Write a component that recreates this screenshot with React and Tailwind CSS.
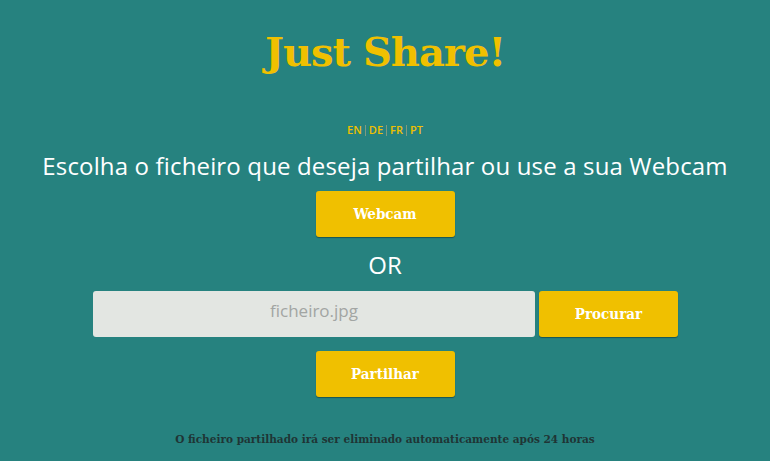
export default function App() {
  const serif = { fontFamily: '"DejaVu Serif Condensed", "DejaVu Serif", serif' };
  const titleFont = { fontFamily: '"DejaVu Serif", serif' };
  const btn =
    "bg-[#f0c000] text-white font-bold text-[15px] w-[139px] h-[46px] rounded-[3px] shadow-[0_1px_1px_rgba(0,0,0,0.35)] flex items-center justify-center";
  return (
    <div className="w-[770px] h-[461px] bg-[#26827f] flex flex-col items-center font-['Open_Sans',sans-serif] overflow-hidden">
      <h1
        className="mt-[24px] h-[56px] text-[40px] font-bold text-[#f0c000] leading-[56px] tracking-[-1px]"
        style={titleFont}
      >
        Just Share!
      </h1>
      <div className="mt-[42px] flex items-center text-[11px] text-[#f0c000] font-semibold leading-[16px]">
        <span>EN</span>
        <span className="mx-[3px] w-px h-[11px] bg-[#7f9a80]"></span>
        <span>DE</span>
        <span className="mx-[3px] w-px h-[11px] bg-[#7f9a80]"></span>
        <span>FR</span>
        <span className="mx-[3px] w-px h-[11px] bg-[#7f9a80]"></span>
        <span>PT</span>
      </div>
      <p className="mt-[12px] text-[24px] text-white leading-[32px] tracking-[0.15px]">
        Escolha o ficheiro que deseja partilhar ou use a sua Webcam
      </p>
      <button className={"mt-[9px] " + btn} style={serif}>
        Webcam
      </button>
      <div className="mt-[13px] text-[24px] text-white leading-[30px]">OR</div>
      <div className="mt-[11px] flex gap-[4px] ml-[1px]">
        <div className="w-[442px] h-[46px] bg-[#e3e6e2] rounded-[3px] flex items-center justify-center text-[17px] text-[#a2a5a3] pb-[6px]">
          ficheiro.jpg
        </div>
        <button className={btn} style={serif}>
          Procurar
        </button>
      </div>
      <button className={"mt-[14px] " + btn} style={serif}>
        Partilhar
      </button>
      <p className="mt-[34px] text-[11.7px] font-bold text-[#1f3535] leading-[16px]" style={serif}>
        O ficheiro partilhado irá ser eliminado automaticamente após 24 horas
      </p>
    </div>
  );
}
